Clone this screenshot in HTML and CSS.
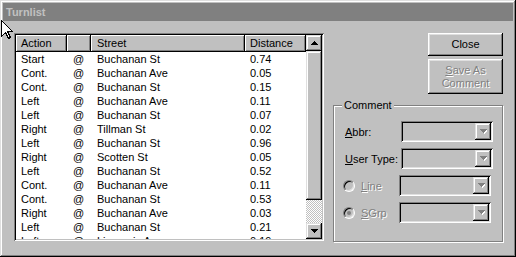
FILE: index.html
```html
<!DOCTYPE html>
<html>
<head>
<meta charset="utf-8">
<link rel="stylesheet" href="styles.css">
</head>
<body>
<div class="window">
  <div class="caption">Turnlist</div>
  <div class="content">
    <div class="listbox">
      <div class="list-main">
        <div class="header">
          <div class="hcell c-action">Action</div>
          <div class="hcell c-at"></div>
          <div class="hcell c-street">Street</div>
          <div class="hcell c-dist">Distance</div>
        </div>
        <div class="rows">
          <div class="row"><span class="c-action">Start</span><span class="c-at">@</span><span class="c-street">Buchanan St</span><span class="c-dist">0.74</span></div>
          <div class="row"><span class="c-action">Cont.</span><span class="c-at">@</span><span class="c-street">Buchanan Ave</span><span class="c-dist">0.05</span></div>
          <div class="row"><span class="c-action">Cont.</span><span class="c-at">@</span><span class="c-street">Buchanan St</span><span class="c-dist">0.15</span></div>
          <div class="row"><span class="c-action">Left</span><span class="c-at">@</span><span class="c-street">Buchanan Ave</span><span class="c-dist">0.11</span></div>
          <div class="row"><span class="c-action">Left</span><span class="c-at">@</span><span class="c-street">Buchanan St</span><span class="c-dist">0.07</span></div>
          <div class="row"><span class="c-action">Right</span><span class="c-at">@</span><span class="c-street">Tillman St</span><span class="c-dist">0.02</span></div>
          <div class="row"><span class="c-action">Left</span><span class="c-at">@</span><span class="c-street">Buchanan St</span><span class="c-dist">0.96</span></div>
          <div class="row"><span class="c-action">Right</span><span class="c-at">@</span><span class="c-street">Scotten St</span><span class="c-dist">0.05</span></div>
          <div class="row"><span class="c-action">Left</span><span class="c-at">@</span><span class="c-street">Buchanan St</span><span class="c-dist">0.52</span></div>
          <div class="row"><span class="c-action">Cont.</span><span class="c-at">@</span><span class="c-street">Buchanan Ave</span><span class="c-dist">0.11</span></div>
          <div class="row"><span class="c-action">Cont.</span><span class="c-at">@</span><span class="c-street">Buchanan St</span><span class="c-dist">0.53</span></div>
          <div class="row"><span class="c-action">Right</span><span class="c-at">@</span><span class="c-street">Buchanan Ave</span><span class="c-dist">0.03</span></div>
          <div class="row"><span class="c-action">Left</span><span class="c-at">@</span><span class="c-street">Buchanan St</span><span class="c-dist">0.21</span></div>
          <div class="row"><span class="c-action">Left</span><span class="c-at">@</span><span class="c-street">Livernois Ave</span><span class="c-dist">0.19</span></div>
        </div>
      </div>
      <div class="scrollbar">
        <div class="sbtn"><svg width="7" height="4" viewBox="0 0 7 4"><path d="M3 0h1v1h1v1h1v1h1v1H0V3h1V2h1V1h1z" fill="#000"/></svg></div>
        <div class="thumb"></div>
        <div class="track"></div>
        <div class="sbtn"><svg width="7" height="4" viewBox="0 0 7 4"><path d="M0 0h7v1H6v1H5v1H4v1H3V3H2V2H1V1H0z" fill="#000"/></svg></div>
      </div>
    </div>
    <div class="side">
      <div class="btn btn-close">Close</div>
      <div class="btn btn-save disabled"><span><u>S</u>ave As</span><span>Comment</span></div>
      <div class="group">
        <div class="group-label">Comment</div>
        <div class="field">
          <div class="flabel"><u>A</u>bbr:</div>
          <div class="combo"><div class="cbtn"><svg width="7" height="5" viewBox="0 0 7 5"><path d="M1 1h7v1H7v1H6v1H5v1H4V4H3V3H2V2H1z" fill="#fff"/><path d="M0 0h7v1H6v1H5v1H4v1H3V3H2V2H1V1H0z" fill="#808080"/></svg></div></div>
        </div>
        <div class="field">
          <div class="flabel"><u>U</u>ser Type:</div>
          <div class="combo"><div class="cbtn"><svg width="7" height="5" viewBox="0 0 7 5"><path d="M1 1h7v1H7v1H6v1H5v1H4V4H3V3H2V2H1z" fill="#fff"/><path d="M0 0h7v1H6v1H5v1H4v1H3V3H2V2H1V1H0z" fill="#808080"/></svg></div></div>
        </div>
        <div class="field">
          <div class="flabel radio-label disabled"><span class="radio"></span><span><u>L</u>ine</span></div>
          <div class="combo"><div class="cbtn"><svg width="7" height="5" viewBox="0 0 7 5"><path d="M1 1h7v1H7v1H6v1H5v1H4V4H3V3H2V2H1z" fill="#fff"/><path d="M0 0h7v1H6v1H5v1H4v1H3V3H2V2H1V1H0z" fill="#808080"/></svg></div></div>
        </div>
        <div class="field">
          <div class="flabel radio-label disabled"><span class="radio checked"></span><span><u>S</u>Grp</span></div>
          <div class="combo"><div class="cbtn"><svg width="7" height="5" viewBox="0 0 7 5"><path d="M1 1h7v1H7v1H6v1H5v1H4V4H3V3H2V2H1z" fill="#fff"/><path d="M0 0h7v1H6v1H5v1H4v1H3V3H2V2H1V1H0z" fill="#808080"/></svg></div></div>
        </div>
      </div>
    </div>
  </div>
  <svg class="cursor" width="13" height="20" viewBox="0 0 13 20" shape-rendering="crispEdges">
    <path d="M0.5 0.5 L0.5 16.5 L4.5 12.5 L7.5 18.5 L9.5 17.5 L6.5 11.5 L11.5 11.5 Z" fill="#fff" stroke="#000" stroke-width="1"/>
  </svg>
</div>
</body>
</html>
```

FILE: styles.css
```css
* { box-sizing: border-box; }
html, body { margin: 0; padding: 0; background: #c0c0c0; }
body {
  font-family: "Liberation Sans", Arial, sans-serif;
  font-size: 11px;
  color: #000;
}
.window {
  position: relative;
  width: 516px;
  height: 257px;
  padding: 3px;
  background: #c0c0c0;
  box-shadow: inset -1px -1px #000, inset 1px 1px #dfdfdf, inset -2px -2px #808080, inset 2px 2px #fff;
  overflow: hidden;
}
.caption {
  height: 18px;
  line-height: 18px;
  background: #808080;
  color: #c0c0c0;
  font-weight: bold;
  padding-left: 3px;
}
.content {
  display: flex;
  padding: 12px 0 0 11px;
}
.listbox {
  width: 310px;
  height: 208px;
  padding: 2px;
  display: flex;
  box-shadow: inset 1px 1px #808080, inset -1px -1px #fff, inset 2px 2px #000, inset -2px -2px #c0c0c0;
}
.list-main {
  width: 290px;
  background: #fff;
  overflow: hidden;
}
.header {
  display: flex;
  height: 17px;
  background: #c0c0c0;
}
.hcell {
  height: 17px;
  line-height: 16px;
  box-shadow: inset -1px -1px #000, inset 1px 1px #fff, inset -2px -2px #808080;
  white-space: nowrap;
  overflow: hidden;
}
.c-action { width: 51px; padding-left: 5px; flex: none; }
.c-at { width: 24px; padding-left: 6px; flex: none; }
.c-street { width: 154px; padding-left: 6px; flex: none; }
.c-dist { width: 61px; padding-left: 5px; flex: none; }
.row {
  display: flex;
  height: 14px;
  line-height: 14px;
  white-space: nowrap;
}
.row span { display: block; }
.scrollbar {
  width: 16px;
  display: flex;
  flex-direction: column;
}
.sbtn, .thumb {
  background: #c0c0c0;
  box-shadow: inset -1px -1px #000, inset 1px 1px #dfdfdf, inset -2px -2px #808080, inset 2px 2px #fff;
}
.sbtn {
  height: 16px;
  display: flex;
  align-items: center;
  justify-content: center;
  padding-bottom: 1px;
}
.thumb { height: 149px; }
.track {
  height: 23px;
  background-color: #c0c0c0;
  background-image: repeating-conic-gradient(#fff 0 25%, #c0c0c0 0 50%);
  background-size: 2px 2px;
}
.side {
  width: 170px;
  margin-left: 9px;
  display: flex;
  flex-direction: column;
  align-items: flex-end;
}
.btn {
  width: 75px;
  background: #c0c0c0;
  box-shadow: inset -1px -1px #000, inset 1px 1px #fff, inset -2px -2px #808080, inset 2px 2px #dfdfdf;
  display: flex;
  flex-direction: column;
  align-items: center;
  justify-content: center;
  line-height: 13px;
}
.btn-close { height: 23px; }
.btn-save { height: 35px; margin-top: 3px; }
.disabled { color: #808080; text-shadow: 1px 1px 0 #fff; }
.group {
  position: relative;
  align-self: stretch;
  height: 137px;
  margin-top: 11px;
  border: 1px solid #808080;
  box-shadow: 1px 1px 0 #fff, inset 1px 1px 0 #fff;
  padding: 15px 0 0 11px;
}
.group-label {
  position: absolute;
  top: -7px;
  left: 8px;
  padding: 0 2px;
  line-height: 13px;
  background: #c0c0c0;
}
.field {
  display: flex;
  align-items: center;
  height: 21px;
  margin-bottom: 6px;
}
.flabel { width: 56px; flex: none; white-space: nowrap; }
.radio-label { display: flex; align-items: center; margin-left: -2px; }
.radio {
  width: 12px;
  height: 12px;
  border-radius: 50%;
  border: 1px solid;
  border-color: #808080 #fff #fff #808080;
  box-shadow: inset 1px 1px #000, inset -1px -1px #dfdfdf;
  background: #c0c0c0;
  margin-right: 6px;
  display: flex;
  align-items: center;
  justify-content: center;
}
.radio.checked::after {
  content: "";
  width: 4px;
  height: 4px;
  border-radius: 50%;
  background: #808080;
}
.combo {
  width: 92px;
  height: 21px;
  padding: 2px;
  background: #c0c0c0;
  box-shadow: inset 1px 1px #808080, inset -1px -1px #fff, inset 2px 2px #000, inset -2px -2px #dfdfdf;
  display: flex;
  justify-content: flex-end;
}
.cbtn {
  width: 16px;
  height: 17px;
  background: #c0c0c0;
  box-shadow: inset -1px -1px #000, inset 1px 1px #dfdfdf, inset -2px -2px #808080, inset 2px 2px #fff;
  display: flex;
  align-items: center;
  justify-content: center;
}
.cursor {
  position: absolute;
  left: 1px;
  top: 20px;
}
```
